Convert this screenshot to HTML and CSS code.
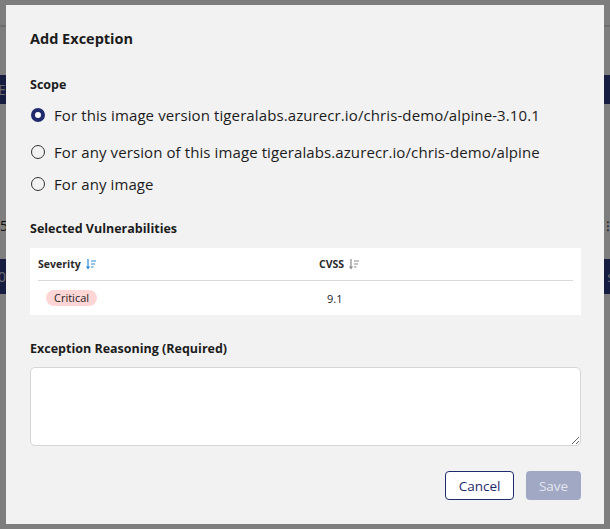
FILE: index.html
```html
<!DOCTYPE html>
<html lang="en">
<head>
  <meta charset="UTF-8">
  <title>Add Exception</title>
  <link rel="stylesheet" href="styles.css">
</head>
<body>
  <div class="page">
    <div class="page-header"></div>
    <div class="page-bar bar-top"><span class="bar-text right">E</span></div>
    <div class="page-label"><span>5</span><span class="muted">⁝</span></div>
    <div class="page-bar bar-mid"><span class="bar-text">0</span><span class="bar-text right">s</span></div>
  </div>

  <div class="overlay">
    <div class="modal">
      <h2 class="modal-title">Add Exception</h2>

      <h3 class="section-label scope-label">Scope</h3>
      <label class="radio-row first">
        <input type="radio" name="scope" checked>
        <span class="radio-dot"></span>
        For this image version tigeralabs.azurecr.io/chris-demo/alpine-3.10.1
      </label>
      <label class="radio-row second">
        <input type="radio" name="scope">
        <span class="radio-dot"></span>
        For any version of this image tigeralabs.azurecr.io/chris-demo/alpine
      </label>
      <label class="radio-row third">
        <input type="radio" name="scope">
        <span class="radio-dot"></span>
        For any image
      </label>

      <h3 class="section-label vuln-label">Selected Vulnerabilities</h3>
      <div class="vuln-table">
        <div class="th">Severity
          <svg class="sort-icon active" width="10" height="12" viewBox="0 0 10 12">
            <path d="M2 1v9M0.5 8.5L2 10.5L3.5 8.5" fill="none" stroke="currentColor" stroke-width="1.2"/>
            <path d="M5 3h5M5 6h4M5 9h2.5" fill="none" stroke="currentColor" stroke-width="1.2"/>
          </svg>
        </div>
        <div class="th">CVSS
          <svg class="sort-icon" width="10" height="12" viewBox="0 0 10 12">
            <path d="M2 1v9M0.5 8.5L2 10.5L3.5 8.5" fill="none" stroke="currentColor" stroke-width="1.2"/>
            <path d="M5 3h5M5 6h4M5 9h2.5" fill="none" stroke="currentColor" stroke-width="1.2"/>
          </svg>
        </div>
        <div class="td"><span class="badge">Critical</span></div>
        <div class="td">9.1</div>
      </div>

      <h3 class="section-label reason-label">Exception Reasoning (Required)</h3>
      <textarea class="reason"></textarea>

      <div class="actions">
        <button class="btn btn-outline">Cancel</button>
        <button class="btn btn-primary" disabled>Save</button>
      </div>
    </div>
  </div>
</body>
</html>
```

FILE: styles.css
```css
body {
  margin: 0;
  width: 610px;
  height: 529px;
  overflow: hidden;
  font-family: "Open Sans", "Liberation Sans", sans-serif;
  color: #1c1c1c;
}
/* page behind the modal */
.page {
  height: 529px;
  background-color: #fdfdfd;
  display: flex;
  flex-direction: column;
}
.page-header {
  height: 25px;
  border-bottom: 2px solid #dcdcdc;
}
.page-bar {
  background-color: #2e3b80;
  display: flex;
  justify-content: space-between;
  align-items: center;
  font-size: 14px;
  color: #d8d8e4;
}
.bar-top {
  margin-top: 48px;
  height: 29px;
}
.page-label {
  margin-top: 112px;
  height: 31px;
  font-size: 14px;
  color: #202020;
  display: flex;
  justify-content: space-between;
}
.muted {
  color: #444;
}
.bar-mid {
  margin-top: 12px;
  height: 35px;
}
.bar-text {
  margin-left: -2px;
}
.bar-text.right {
  margin-right: -4px;
}
.overlay {
  position: fixed;
  inset: 0;
  background-color: rgba(0, 0, 0, 0.5);
  display: flex;
  justify-content: center;
  align-items: center;
}
/* modal */
.modal {
  width: 551px;
  background-color: #f2f2f2;
  padding: 24px 23px 24px 24px;
  display: flex;
  flex-direction: column;
  align-items: flex-start;
}
.modal-title {
  margin: 0;
  font-size: 14.5px;
  line-height: 20px;
  font-weight: 700;
}
.section-label {
  margin: 0;
  font-size: 12.5px;
  line-height: 18px;
  font-weight: 700;
}
.scope-label {
  margin-top: 27px;
}
.radio-row {
  display: flex;
  align-items: center;
  gap: 9px;
  font-size: 15px;
  letter-spacing: 0.1px;
  line-height: 20px;
  cursor: pointer;
}
.radio-row input {
  display: none;
}
.radio-row.first {
  margin-top: 11px;
}
.radio-row.second {
  margin-top: 17px;
}
.radio-row.third {
  margin-top: 12px;
}
.radio-dot {
  width: 14px;
  height: 14px;
  box-sizing: border-box;
  border: 1.6px solid #333;
  border-radius: 50%;
  margin-left: 1px;
  flex-shrink: 0;
}
.radio-row input:checked + .radio-dot {
  border: 4.5px solid #1f2b6c;
  background-color: #fff;
}
.vuln-label {
  margin-top: 26px;
}
/* table */
.vuln-table {
  margin-top: 10px;
  align-self: stretch;
  background-color: #fff;
  padding: 0 8px;
  display: grid;
  grid-template-columns: 281px 1fr;
}
.th {
  height: 32px;
  border-bottom: 1px solid #d9d9d9;
  display: flex;
  align-items: center;
  gap: 5px;
  font-size: 10.5px;
  font-weight: 700;
  color: #2a2a2a;
}
.sort-icon {
  color: #8c8c8c;
}
.sort-icon.active {
  color: #2f8bd6;
}
.td {
  height: 34px;
  padding-left: 8px;
  display: flex;
  align-items: center;
  font-size: 11px;
}
.badge {
  background-color: #ffd6d6;
  border-radius: 8px;
  padding: 0 8px;
  line-height: 16px;
}
.reason-label {
  margin-top: 25px;
}
.reason {
  margin-top: 9px;
  align-self: stretch;
  height: 79px;
  box-sizing: border-box;
  border: 1px solid #d6d6d6;
  border-radius: 5px;
  background-color: #fff;
  resize: vertical;
}
/* buttons */
.actions {
  margin-top: 25px;
  align-self: stretch;
  display: flex;
  justify-content: flex-end;
  gap: 12px;
}
.btn {
  height: 29px;
  border-radius: 4px;
  font-family: inherit;
  font-size: 13.5px;
  cursor: pointer;
}
.btn-outline {
  width: 69px;
  background-color: #fff;
  border: 1px solid #1f2b6c;
  color: #1f2b6c;
}
.btn-primary {
  width: 55px;
  border: none;
  background-color: #a1a8c4;
  color: #e3e6f0;
}
.btn-primary:disabled {
  cursor: not-allowed;
}
```
